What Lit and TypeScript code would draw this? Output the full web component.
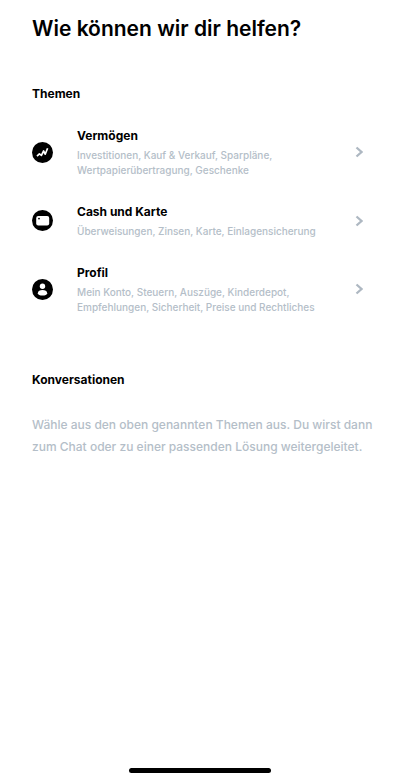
import { LitElement, html, css, svg } from "lit";
import { customElement } from "lit/decorators.js";

const icons = {
  chart: svg`<path d="M5 14.2 7.4 11.8 9.4 13.4 11.6 9 13.2 12.2 15.6 6.2" fill="none" stroke="#fff" stroke-width="1.7" stroke-linejoin="round"/>`,
  card: svg`<rect x="4.2" y="6" width="13" height="9.6" rx="2" fill="#fff"/><circle cx="7" cy="8.6" r=".9" fill="#000"/>`,
  person: svg`<circle cx="10.5" cy="7.2" r="2.7" fill="#fff"/><path d="M5.8 14.2C5.8 12 8 11 10.5 11s4.7 1 4.7 3.2C15.2 15.8 13 16.6 10.5 16.6s-4.7-.8-4.7-2.4z" fill="#fff"/>`,
};

const topics = [
  { icon: icons.chart, title: "Vermögen", text: "Investitionen, Kauf & Verkauf, Sparpläne, Wertpapierübertragung, Geschenke" },
  { icon: icons.card, title: "Cash und Karte", text: "Überweisungen, Zinsen, Karte, Einlagensicherung" },
  { icon: icons.person, title: "Profil", text: "Mein Konto, Steuern, Auszüge, Kinderdepot, Empfehlungen, Sicherheit, Preise und Rechtliches" },
];

@customElement("app-root")
export class AppRoot extends LitElement {
  static styles = css`
    :host { display: flex; flex-direction: column; min-height: 100vh; box-sizing: border-box; background: #fff; color: #000; font-family: Inter, "Liberation Sans", sans-serif; }
    main { flex: 1; padding: 16px 24px 0 32px; }
    h1, h2, h3, p, ul { margin: 0; padding: 0; }
    h1 { font-size: 21px; line-height: 26px; font-weight: 600; }
    h2 { font-size: 12px; line-height: 20px; font-weight: 700; }
    .section { margin-top: 42px; }
    .talks { margin-top: 55px; }
    .topics { list-style: none; margin-top: 22px; display: flex; flex-direction: column; gap: 24px; }
    .topic { display: flex; align-items: center; width: 100%; border: 0; padding: 0; margin: 0; background: none; font: inherit; color: inherit; text-align: left; cursor: pointer; }
    .icon { flex: none; width: 21px; height: 21px; margin-right: 24px; }
    .body { flex: 1; display: block; }
    .title { display: block; font-size: 12px; line-height: 20px; font-weight: 700; }
    .text { display: block; max-width: 240px; margin-top: 2px; font-size: 10px; line-height: 15px; font-weight: 500; color: #b4bec8; }
    .chevron { flex: none; width: 8px; height: 12px; margin-right: 13px; }
    .note { margin-top: 24px; font-size: 12px; line-height: 22px; font-weight: 500; color: #b4bec8; }
    .home { align-self: center; width: 142px; height: 5px; border-radius: 3px; background: #000; margin-bottom: 9px; }
  `;

  render() {
    return html`
      <main>
        <h1>Wie können wir dir helfen?</h1>
        <h2 class="section">Themen</h2>
        <ul class="topics">
          ${topics.map((t) => html`<li><button class="topic">
            <svg class="icon" viewBox="0 0 21 21" aria-hidden="true"><circle cx="10.5" cy="10.5" r="10.5"/>${t.icon}</svg>
            <span class="body"><span class="title">${t.title}</span><span class="text">${t.text}</span></span>
            <svg class="chevron" viewBox="0 0 8 12" aria-hidden="true"><path d="M1.5 1.5 6.5 6 1.5 10.5" fill="none" stroke="#aeb8c2" stroke-width="2.3"/></svg>
          </button></li>`)}
        </ul>
        <h2 class="talks">Konversationen</h2>
        <p class="note">Wähle aus den oben genannten Themen aus. Du wirst dann zum Chat oder zu einer passenden Lösung weitergeleitet.</p>
      </main>
      <div class="home"></div>
    `;
  }
}
